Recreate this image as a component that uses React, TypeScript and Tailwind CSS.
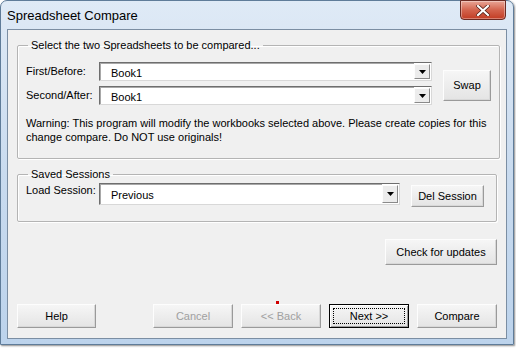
import React from 'react';

const font = { fontFamily: '"Liberation Sans", Arial, sans-serif' };

const Btn = ({
  label,
  className = '',
  disabled = false,
  focused = false,
}: {
  label: string;
  className?: string;
  disabled?: boolean;
  focused?: boolean;
}) => (
  <div
    className={`flex items-center justify-center border bg-gradient-to-b from-[#f6f6f6] to-[#e4e4e4] text-[11px] ${
      focused
        ? 'border-black shadow-[inset_1px_1px_0_#ffffff,inset_-1px_-1px_0_#a0a0a0]'
        : 'border-t-[#fdfdfd] border-l-[#fdfdfd] border-r-[#9a9a9a] border-b-[#9a9a9a] shadow-[inset_-1px_-1px_0_#d8d8d8]'
    } ${disabled ? 'text-[#a0a0a0]' : 'text-black'} ${className}`}
  >
    {focused ? (
      <div className="flex h-[calc(100%-6px)] w-[calc(100%-6px)] items-center justify-center border border-dotted border-black">
        {label}
      </div>
    ) : (
      label
    )}
  </div>
);

const Combo = ({ value, className = '' }: { value: string; className?: string }) => (
  <div
    className={`flex items-stretch border border-t-[#6e6e6e] border-l-[#6e6e6e] border-r-[#d8d8d8] border-b-[#d8d8d8] bg-white ${className}`}
  >
    <div className="flex flex-1 items-center border-t border-l border-t-[#a8a8a8] border-l-[#a8a8a8] pl-[10px] pt-[2px] text-[11px] text-black">
      {value}
    </div>
    <div className="my-[1px] mr-[1px] flex w-[16px] items-center justify-center border border-t-[#fdfdfd] border-l-[#fdfdfd] border-r-[#8a8a8a] border-b-[#8a8a8a] bg-[#ececec]">
      <svg width="7" height="4" viewBox="0 0 7 4">
        <path d="M0 0H7L3.5 4Z" fill="#000" />
      </svg>
    </div>
  </div>
);

const Group = ({
  title,
  className = '',
  children,
}: {
  title: string;
  className?: string;
  children: React.ReactNode;
}) => (
  <fieldset className={`rounded-[2px] border border-[#b4b4b4] shadow-[inset_1px_1px_0_#ffffff,1px_1px_0_#ffffff] ${className}`}>
    <legend className="ml-[2px] px-[3px] text-[11px] leading-[14px] text-black">{title}</legend>
    {children}
  </fieldset>
);

export default function App() {
  return (
    <div
      className="relative h-[348px] w-[516px] overflow-hidden bg-white"
      style={font}
    >
      <div className="flex h-[345px] w-[514px] flex-col rounded-t-[7px] border border-[#5f7c99] bg-gradient-to-b from-[#dfeaf6] via-[#c9dbef] to-[#bcd3ec] shadow-[1px_1px_2px_rgba(0,0,0,0.45)]">
        {/* title bar */}
        <div className="relative flex h-[28px] items-center pl-[6px] pt-[2px]">
          <span className="text-[13px] text-black">Spreadsheet Compare</span>
          <div className="absolute right-[7px] top-[-1px] flex h-[20px] w-[46px] items-center justify-center rounded-b-[4px] border border-[#6b2a22] bg-gradient-to-b from-[#e8a596] via-[#d3634d] to-[#c23b22] shadow-[inset_0_0_0_1px_rgba(255,255,255,0.35)]">
            <svg width="14" height="11" viewBox="0 0 14 11">
              <path d="M2 1L12 10M12 1L2 10" stroke="#4d1a12" strokeWidth="3.6" strokeLinecap="square" />
              <path d="M2 1L12 10M12 1L2 10" stroke="#ffffff" strokeWidth="2.2" strokeLinecap="square" />
            </svg>
          </div>
        </div>

        {/* client area */}
        <div className="mx-[6px] flex h-[310px] flex-col border border-[#7b8ea3] bg-[#f0f0f0] px-[9px] pt-[8px]">
          <Group title="Select the two Spreadsheets to be compared..." className="h-[121px] px-[8px]">
            <div className="mt-[10px] flex">
              <div className="flex flex-col gap-[5px]">
                <div className="flex h-[19px] items-center">
                  <span className="w-[73px] text-[11px]">First/Before:</span>
                  <Combo value="Book1" className="h-[19px] w-[333px]" />
                </div>
                <div className="flex h-[19px] items-center">
                  <span className="w-[73px] text-[11px]">Second/After:</span>
                  <Combo value="Book1" className="h-[19px] w-[333px]" />
                </div>
              </div>
              <Btn label="Swap" className="ml-[11px] mt-[8px] h-[31px] w-[48px]" />
            </div>
            <p className="mt-[11px] whitespace-nowrap text-[11px] leading-[14px]">
              Warning: This program will modify the workbooks selected above. Please create copies for this
              <br />
              change compare. Do NOT use originals!
            </p>
          </Group>

          <Group title="Saved Sessions" className="mt-[8px] h-[55px] px-[8px]">
            <div className="flex items-start">
              <span className="mt-[1px] w-[73px] text-[11px]">Load Session:</span>
              <Combo value="Previous" className="mt-[2px] h-[22px] w-[301px]" />
              <Btn label="Del Session" className="ml-[11px] mt-[4px] h-[22px] w-[73px]" />
            </div>
          </Group>

          <div className="mt-[17px] flex justify-end">
            <Btn label="Check for updates" className="h-[26px] w-[112px]" />
          </div>

          <div className="mt-[39px] flex items-center">
            <Btn label="Help" className="h-[24px] w-[80px]" />
            <div className="relative ml-[57px] flex gap-[8px]">
              <div className="absolute left-[123px] top-[-3px] h-[3px] w-[3px] bg-[#d00000]" />
              <Btn label="Cancel" disabled className="h-[24px] w-[80px]" />
              <Btn label="<< Back" disabled className="h-[24px] w-[80px]" />
              <Btn label="Next >>" focused className="h-[24px] w-[80px]" />
              <Btn label="Compare" className="h-[24px] w-[80px]" />
            </div>
          </div>
        </div>
      </div>
    </div>
  );
}
